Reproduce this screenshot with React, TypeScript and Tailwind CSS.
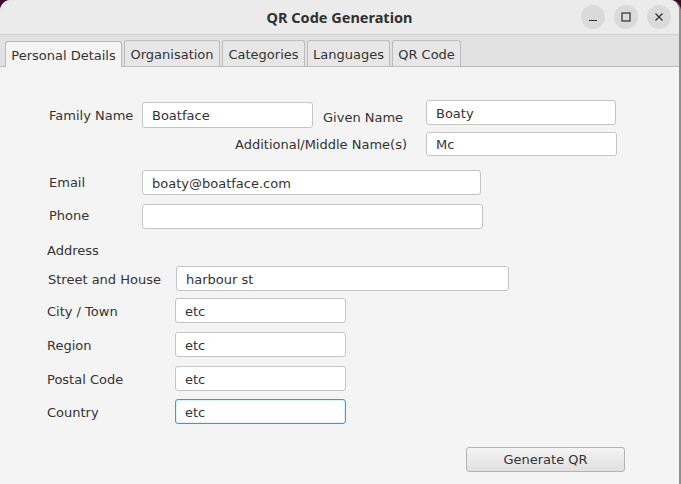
const font = { fontFamily: '"DejaVu Sans", sans-serif' };

function Field({ w, h = 'h-[25px]', value = '', focused = false }: { w: string; h?: string; value?: string; focused?: boolean }) {
    return (
        <div
            className={`${w} ${h} flex items-center rounded-[3px] bg-white pl-[9px] pt-[2px] text-[13px] text-[#333] ${
                focused ? 'border border-[#1fa6e6] shadow-[inset_0_0_0_1px_#dff1fa]' : 'border border-[#c4c4c4]'
            }`}
        >
            {value}
        </div>
    );
}

const tabs = [
    { name: 'Personal Details', w: 'w-[117px]', active: true },
    { name: 'Organisation', w: 'w-[96px]' },
    { name: 'Categories', w: 'w-[83px]' },
    { name: 'Languages', w: 'w-[83px]' },
    { name: 'QR Code', w: 'w-[69px]' },
];

export default function App() {
    return (
        <div className="w-[681px] h-[484px] bg-[#3a0c2c] overflow-hidden" style={font}>
            <div className="w-[681px] h-[484px] flex flex-col rounded-t-[11px] bg-[#f4f4f4] border-r-2 border-[#8e8e8e] overflow-hidden">
                {/* title bar */}
                <div className="h-[34px] shrink-0 bg-[#ebebeb] flex items-center relative">
                    <div
                        className="w-full text-center text-[14.5px] font-bold text-[#303030] pt-[1px]"
                        style={{ fontFamily: '"Noto Sans", sans-serif' }}
                    >
                        QR Code Generation
                    </div>
                    <div className="absolute right-[8px] top-[5px] flex gap-[9px]">
                        <div className="w-[24px] h-[24px] rounded-full bg-[#dadada] flex items-center justify-center">
                            <svg width="10" height="10" viewBox="0 0 10 10">
                                <path d="M1 8.5h8" stroke="#2e2e2e" strokeWidth="1.2" />
                            </svg>
                        </div>
                        <div className="w-[24px] h-[24px] rounded-full bg-[#dadada] flex items-center justify-center">
                            <svg width="10" height="10" viewBox="0 0 10 10">
                                <rect x="1" y="1" width="8" height="8" fill="none" stroke="#2e2e2e" strokeWidth="1.2" />
                            </svg>
                        </div>
                        <div className="w-[24px] h-[24px] rounded-full bg-[#dadada] flex items-center justify-center">
                            <svg width="10" height="10" viewBox="0 0 10 10">
                                <path d="M1.5 1.5l7 7M8.5 1.5l-7 7" stroke="#2e2e2e" strokeWidth="1.2" />
                            </svg>
                        </div>
                    </div>
                </div>

                {/* tab header */}
                <div className="h-[33px] shrink-0 bg-[#e1e1e1] border-t border-[#cfcfcf] border-b border-b-[#bdbdbd] flex items-end pl-[5px] gap-[2px]">
                    {tabs.map((t) => (
                        <div
                            key={t.name}
                            className={`${t.w} flex items-center justify-center rounded-t-[3px] border border-b-0 pt-[2px] text-[13px] text-[#333] ${
                                t.active
                                    ? 'h-[26px] -mb-px bg-[#f4f4f4] border-[#b9b9b9]'
                                    : 'h-[26px] bg-[#e7e7e7] border-[#bcbcbc]'
                            }`}
                        >
                            {t.name}
                        </div>
                    ))}
                </div>

                {/* content */}
                <div className="flex-1 flex flex-col pt-[33px] text-[13px] text-[#333]">
                    <div className="flex items-start h-[28px]">
                        <div className="ml-[49px] w-[93px] mt-[6px]">Family Name</div>
                        <div className="mt-[2px]">
                            <Field w="w-[171px]" h="h-[26px]" value="Boatface" />
                        </div>
                        <div className="ml-[10px] w-[103px] mt-[8px]">Given Name</div>
                        <Field w="w-[190px]" value="Boaty" />
                    </div>

                    <div className="flex items-center mt-[4px]">
                        <div className="w-[407px] text-right pt-[2px]">Additional/Middle Name(s)</div>
                        <div className="ml-[19px]">
                            <Field w="w-[191px]" h="h-[24px]" value="Mc" />
                        </div>
                    </div>

                    <div className="flex items-center mt-[14px]">
                        <div className="ml-[49px] w-[93px] pt-[1px]">Email</div>
                        <Field w="w-[339px]" value="boaty@boatface.com" />
                    </div>

                    <div className="flex items-center mt-[9px]">
                        <div className="ml-[49px] w-[93px] -mt-[1px]">Phone</div>
                        <Field w="w-[341px]" />
                    </div>

                    <div className="ml-[47px] mt-[14px] leading-[16px]">Address</div>

                    <div className="flex items-center mt-[7px]">
                        <div className="ml-[48px] w-[128px] pt-[2px]">Street and House</div>
                        <Field w="w-[333px]" value="harbour st" />
                    </div>

                    <div className="flex items-center mt-[7px]">
                        <div className="ml-[47px] w-[128px] pt-[2px]">City / Town</div>
                        <Field w="w-[171px]" value="etc" />
                    </div>

                    <div className="flex items-center mt-[9px]">
                        <div className="ml-[47px] w-[128px] pt-[2px]">Region</div>
                        <Field w="w-[171px]" value="etc" />
                    </div>

                    <div className="flex items-center mt-[9px]">
                        <div className="ml-[47px] w-[128px] pt-[2px]">Postal Code</div>
                        <Field w="w-[171px]" value="etc" />
                    </div>

                    <div className="flex items-center mt-[8px]">
                        <div className="ml-[47px] w-[128px] pt-[2px]">Country</div>
                        <Field w="w-[171px]" value="etc" focused />
                    </div>

                    <div className="flex mt-[23px]">
                        <button className="ml-[466px] w-[159px] h-[25px] pt-[1px] rounded-[3px] border border-[#b3b3b3] bg-gradient-to-b from-[#f4f4f4] to-[#e0e0e0] text-[13px] text-[#333]">
                            Generate QR
                        </button>
                    </div>
                </div>
            </div>
        </div>
    );
}
